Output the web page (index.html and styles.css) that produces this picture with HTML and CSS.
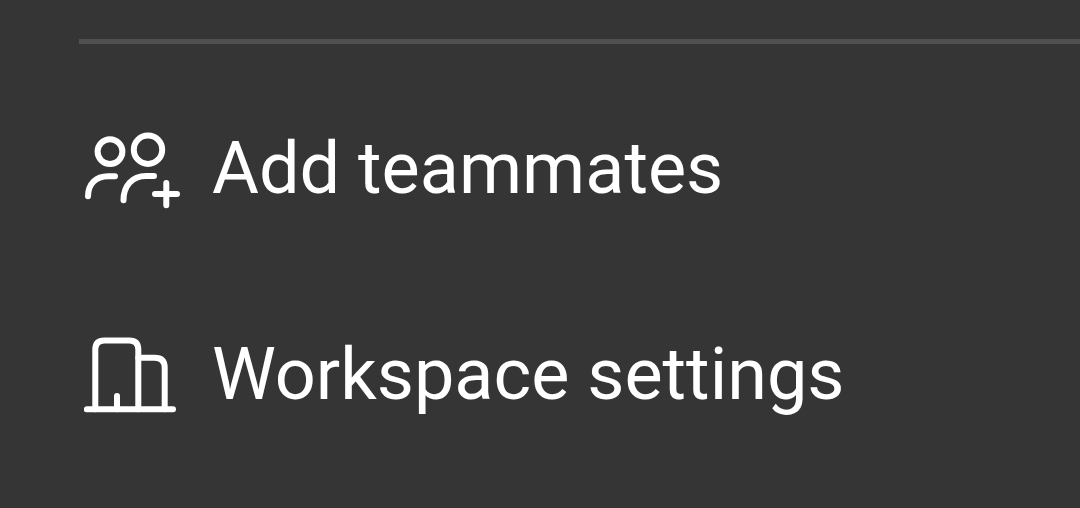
FILE: index.html
```html
<!DOCTYPE html>
<html lang="en">
<head>
  <meta charset="UTF-8">
  <meta name="viewport" content="width=device-width, initial-scale=1">
  <title>Workspace menu</title>
  <link rel="stylesheet" href="styles.css">
</head>
<body>

  <nav class="menu">
    <hr class="divider">
    <button type="button" class="menu-item">
      <svg class="icon" viewBox="0 0 96 80" aria-hidden="true">
        <circle cx="26" cy="22.6" r="12.4"/>
        <circle cx="64" cy="20.7" r="14.2"/>
        <path d="M4 67.3C4 55 12 47.3 24 47.3H31"/>
        <path d="M39.5 71.3C39.5 57 48 47 62 47H70"/>
        <path d="M82.3 54V76.3M71 65H93"/>
      </svg>
      <span>Add teammates</span>
    </button>
    <button type="button" class="menu-item">
      <svg class="icon" viewBox="0 0 96 80" aria-hidden="true">
        <path d="M2.8 74.3H89"/>
        <path d="M11.3 74.3V14.6Q11.3 5.6 20.3 5.6H45.3Q54.3 5.6 54.3 14.6V74.3"/>
        <path d="M54.3 22.8H70.7Q80.7 22.8 80.7 32.8V74.3"/>
        <path d="M33 74.3V61"/>
      </svg>
      <span>Workspace settings</span>
    </button>
  </nav>

</body>
</html>
```

FILE: styles.css
```css
:root {
  --bg-color: #353535;
  --text-color: #fff;
  --border-color: #505050;
  --edge-color: #3a3034;
}
* {
  box-sizing: border-box;
}
body {
  margin: 0;
  min-height: 100vh;
  font-family: Roboto, "Liberation Sans", sans-serif;
  background: var(--bg-color);
  color: var(--text-color);
  border-bottom: 1px solid var(--edge-color);
}
.menu {
  display: flex;
  flex-direction: column;
  padding-top: 39px;
}
.divider {
  align-self: stretch;
  height: 5px;
  margin: 0 0 83px 79px;
  border: none;
  background: var(--border-color);
}
.menu-item {
  display: flex;
  align-items: center;
  gap: 32px;
  margin: 0 0 122px;
  padding: 0 0 0 84px;
  border: none;
  background: none;
  color: inherit;
  font-family: inherit;
  font-size: 72px;
  line-height: 84px;
  text-align: left;
  white-space: nowrap;
  cursor: pointer;
}
.menu-item:last-child {
  margin-bottom: 0;
}
.icon {
  flex: none;
  width: 96px;
  height: 80px;
  fill: none;
  stroke: currentColor;
  stroke-width: 6;
  stroke-linecap: round;
  stroke-linejoin: round;
}
```
